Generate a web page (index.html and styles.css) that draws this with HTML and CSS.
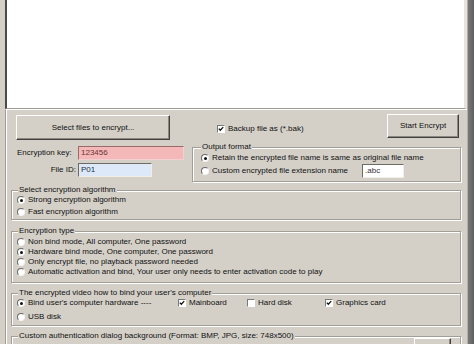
FILE: index.html
```html
<!DOCTYPE html>
<html>
<head>
<meta charset="utf-8">
<link rel="stylesheet" href="styles.css">
</head>
<body>
<div class="app">
  <div class="main">
    <div class="view"></div>
    <div class="panel">
      <div class="row1">
        <button class="btn btn-select">Select files to encrypt...</button>
        <label class="chk chk-backup"><span class="box"><svg viewBox="0 0 6 6"><path d="M0.8 2.6 L2.3 4.2 L5.2 1.1" /></svg></span>Backup file as (*.bak)</label>
        <button class="btn btn-start">Start Encrypt</button>
      </div>
      <div class="row2">
        <div class="keys">
          <div class="field"><span class="lbl">Encryption key:</span><span class="input pink">123456</span></div>
          <div class="field"><span class="lbl lbl-right">File ID:</span><span class="input blue">P01</span></div>
        </div>
        <fieldset class="grp grp-out">
          <legend>Output format</legend>
          <div class="radio"><span class="dot on"></span>Retain the encrypted file name is same as original file name</div>
          <div class="radio radio-ext"><span class="dot"></span>Custom encrypted file extension name<span class="input ext">.abc</span></div>
        </fieldset>
      </div>
      <fieldset class="grp grp-wide grp-alg">
        <legend>Select encryption algorithm</legend>
        <div class="radio"><span class="dot on"></span>Strong encryption algorithm</div>
        <div class="radio radio-gap2"><span class="dot"></span>Fast encryption algorithm</div>
      </fieldset>
      <fieldset class="grp grp-wide grp-type">
        <legend>Encryption type</legend>
        <div class="radio"><span class="dot"></span>Non bind mode, All computer, One password</div>
        <div class="radio"><span class="dot on"></span>Hardware bind mode, One computer, One password</div>
        <div class="radio"><span class="dot"></span>Only encrypt file, no playback password needed</div>
        <div class="radio"><span class="dot"></span>Automatic activation and bind, Your user only needs to enter activation code to play</div>
      </fieldset>
      <fieldset class="grp grp-wide grp-bind">
        <legend>The encrypted video how to bind your user's computer</legend>
        <div class="bind-row">
          <div class="radio radio-hw"><span class="dot on"></span>Bind user's computer hardware ----</div>
          <label class="chk chk-main"><span class="box"><svg viewBox="0 0 6 6"><path d="M0.8 2.6 L2.3 4.2 L5.2 1.1" /></svg></span>Mainboard</label>
          <label class="chk chk-hd"><span class="box"></span>Hard disk</label>
          <label class="chk"><span class="box"><svg viewBox="0 0 6 6"><path d="M0.8 2.6 L2.3 4.2 L5.2 1.1" /></svg></span>Graphics card</label>
        </div>
        <div class="radio radio-gap4"><span class="dot"></span>USB disk</div>
      </fieldset>
      <fieldset class="grp grp-wide grp-custom">
        <legend>Custom authentication dialog background (Format: BMP, JPG, size: 748x500)</legend>
        <div class="custom-row"><button class="btn btn-browse" aria-label="Browse"></button></div>
      </fieldset>
    </div>
  </div>
  <div class="edge"></div>
</div>
</body>
</html>
```
FILE: styles.css
```css
* { box-sizing: border-box; }
html, body {
  margin: 0;
  padding: 0;
  width: 474px;
  height: 344px;
  overflow: hidden;
  background: #d4d0c8;
}
body {
  font-family: "Liberation Sans", Arial, sans-serif;
  font-size: 8px;
  line-height: 10px;
  color: #111;
}
.app { display: flex; height: 344px; }
.main { width: 467px; display: flex; flex-direction: column; }
.edge {
  width: 7px;
  background: linear-gradient(90deg, #b0aca6 0, #b0aca6 1px, #7a7a7a 1px, #5e5e5e 100%);
}
.view {
  margin-left: 5px;
  height: 109px;
  flex: none;
  background: #fff;
  border-left: 2px solid #4a4a4a;
  border-right: 3px solid #e6e4df;
  border-bottom: 1px solid #a09c94;
}
.panel {
  margin-left: 5px;
  flex: 1;
  border-top: 1px solid #fff;
  border-left: 1px solid #a09c94;
  box-shadow: inset 1px 0 0 #fff;
  padding: 5px 0 0 2px;
}
.row1 { display: flex; align-items: flex-start; height: 25px; }
.btn {
  font: inherit;
  color: inherit;
  background: #d4d0c8;
  border: 1px solid;
  border-color: #fff #404040 #404040 #fff;
  box-shadow: inset -1px -1px 0 #8c8880;
  padding: 0;
  height: 25px;
}
.btn-select { margin-left: 8px; width: 154px; }
.btn-start { margin-left: auto; margin-right: 8px; width: 72px; height: 24px; margin-top: -1px; }
.chk { display: flex; align-items: center; height: 10px; }
.chk-backup { margin-left: 47px; margin-top: 9px; }
.box {
  width: 8px;
  height: 8px;
  flex: none;
  margin-right: 3px;
  background: #fff;
  border: 1px solid;
  border-color: #7a7a7a #fff #fff #7a7a7a;
  display: flex;
}
.box svg { width: 6px; height: 6px; }
.box path { fill: none; stroke: #111; stroke-width: 1.3; }
.row2 { display: flex; align-items: flex-start; margin-top: 6px; }
.keys { width: 184px; flex: none; }
.field { display: flex; align-items: center; height: 14px; }
.field + .field { margin-top: 3px; }
.lbl { width: 70px; padding-left: 9px; flex: none; }
.lbl-right { text-align: right; padding-left: 0; padding-right: 2px; }
.input {
  height: 14px;
  line-height: 12px;
  padding: 0 2px;
  border: 1px solid;
  border-color: #6e6a64 #f0eee8 #f0eee8 #6e6a64;
  background: #fff;
  flex: none;
}
.pink { width: 106px; background: #f5b8b8; color: #6a3434; border-color: #9a6a6a #f0d0d0 #f0d0d0 #9a6a6a; }
.blue { width: 74px; background: #dde9f8; color: #23304a; }
.ext { width: 42px; margin-left: 14px; color: #333; }
.grp {
  margin: 0;
  min-width: 0;
  border: 1px solid #a19e98;
  box-shadow: inset 1px 1px 0 #fff, 1px 1px 0 #fff;
}
.grp legend {
  line-height: 10px;
  padding: 0 1px;
  background: #d4d0c8;
}
.grp-out { width: 269px; margin-top: -4px; padding: 1px 0 3px 8px; }
.radio { display: flex; align-items: center; height: 10px; white-space: nowrap; }
.radio-ext { height: 14px; margin-top: 1px; }
.dot {
  width: 8px;
  height: 8px;
  flex: none;
  border-radius: 50%;
  margin-right: 3px;
  background: #fff;
  border: 1px solid;
  border-color: #6a6a6a #f4f4f4 #f4f4f4 #6a6a6a;
  position: relative;
}
.dot.on::after {
  content: "";
  position: absolute;
  left: 1.5px;
  top: 1.5px;
  width: 3px;
  height: 3px;
  border-radius: 50%;
  background: #111;
}
.grp-wide { width: 450px; margin-left: 3px; padding-left: 5px; padding-right: 0; }
.grp-wide legend { margin-left: 1px; }
.grp-alg { margin-top: 3px; padding-top: 0; padding-bottom: 2px; }
.radio-gap2 { margin-top: 2px; }
.grp-type { margin-top: 6px; padding-top: 1px; padding-bottom: 5px; }
.grp-bind { margin-top: 5px; padding-top: 0; padding-bottom: 3px; }
.bind-row { display: flex; align-items: center; height: 10px; }
.radio-hw { width: 161px; flex: none; }
.chk-main { width: 69px; flex: none; }
.chk-hd { width: 78px; flex: none; }
.radio-gap4 { margin-top: 4px; }
.grp-custom { margin-top: 5px; padding-top: 0; padding-bottom: 4px; }
.custom-row { display: flex; justify-content: flex-end; }
.btn-browse { width: 37px; height: 20px; margin-top: -3px; margin-right: 9px; }
```
